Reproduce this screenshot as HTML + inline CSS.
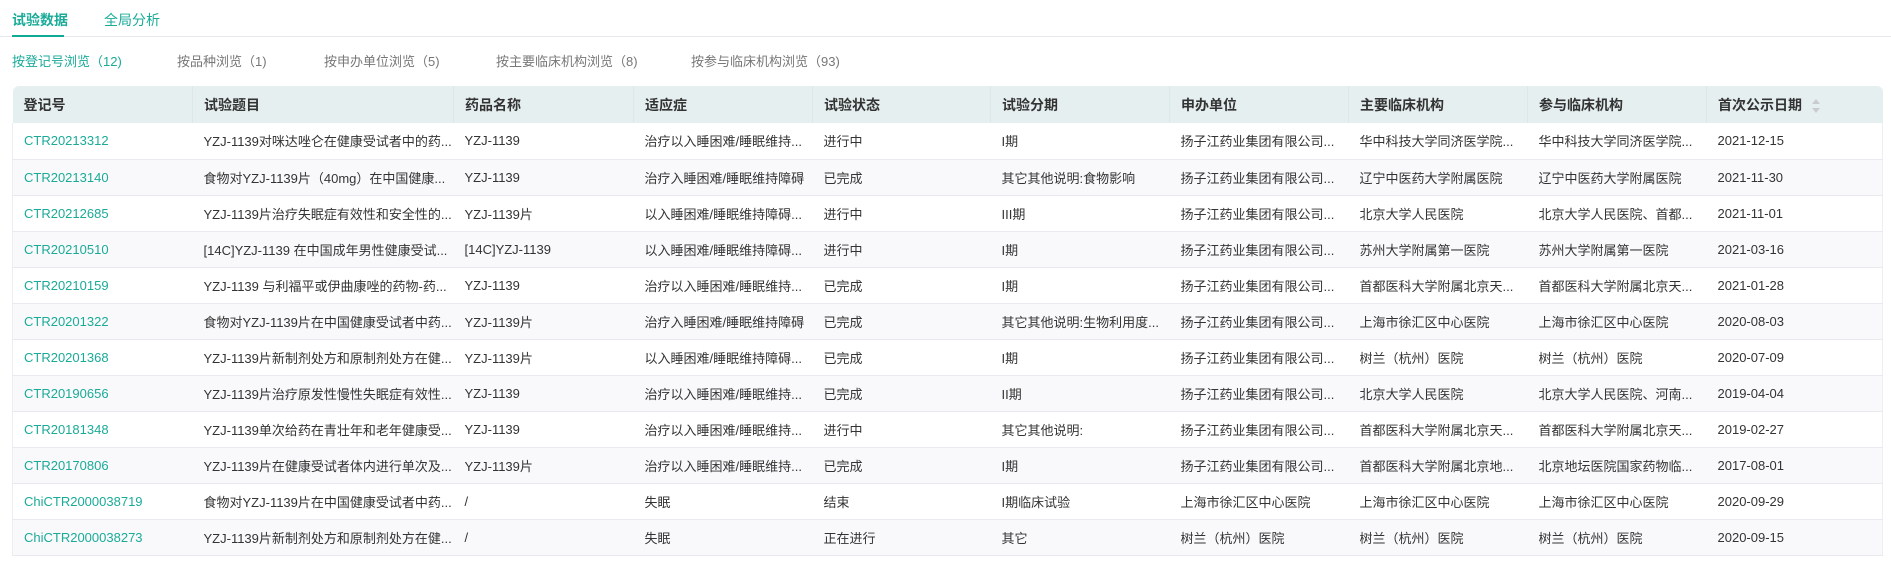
<!DOCTYPE html>
<html><head><meta charset="utf-8"><style>
*{margin:0;padding:0;box-sizing:border-box}
body{width:1891px;height:566px;background:#fff;font-family:"Liberation Sans","Noto Sans CJK SC",sans-serif;color:#333;position:relative;overflow:hidden}
.tabs{position:absolute;left:0;top:0;width:1891px;height:37px;border-bottom:1px solid #e6e8ee}
.tab{position:absolute;top:10px;font-size:14px;color:#1aab98}
.ul{position:absolute;left:12px;top:35px;width:52px;height:2px;background:#12a896}
.sub{position:absolute;top:51px;font-size:13px;color:#777}
table{position:absolute;left:12px;top:86px;width:1870px;border-collapse:collapse;table-layout:fixed;font-size:13px}
th{background:#e6eff0;height:37px;text-align:left;font-weight:bold;color:#333;padding-left:11px;font-size:14px;border-right:1px solid #dbe8e8}
th:first-child{border-top-left-radius:6px}
th:last-child{border-top-right-radius:6px;border-right:none}
td{height:36px;padding-left:11px;border-bottom:1px solid #e8eaf0;white-space:nowrap;overflow:hidden;color:#333}
tr:nth-child(even) td{background:#f9f9fb}
tbody tr td:first-child{border-left:1px solid #eceef2}
tbody tr td:last-child{border-right:1px solid #eceef2}
td.l{color:#1aab98}
.sort{display:inline-block;vertical-align:middle;margin-left:10px;position:relative;width:8px;height:14px}
.sort:before{content:"";position:absolute;top:0;left:0;border:4px solid transparent;border-bottom:5px solid #c8ccd0;border-top:0}
.sort:after{content:"";position:absolute;bottom:0;left:0;border:4px solid transparent;border-top:5px solid #c8ccd0;border-bottom:0}
</style></head><body>
<div class="tabs"></div>
<div class="tab" style="left:12px;font-weight:bold">试验数据</div>
<div class="tab" style="left:104px">全局分析</div>
<div class="ul"></div>
<div class="sub" style="left:12px;color:#1aab98">按登记号浏览（12)</div>
<div class="sub" style="left:177px">按品种浏览（1)</div>
<div class="sub" style="left:324px">按申办单位浏览（5)</div>
<div class="sub" style="left:496px">按主要临床机构浏览（8)</div>
<div class="sub" style="left:691px">按参与临床机构浏览（93)</div>
<table>
<colgroup><col style="width:180px"><col style="width:261px"><col style="width:180px"><col style="width:179px"><col style="width:178px"><col style="width:179px"><col style="width:179px"><col style="width:179px"><col style="width:179px"><col style="width:176px"></colgroup>
<thead><tr><th>登记号</th><th>试验题目</th><th>药品名称</th><th>适应症</th><th>试验状态</th><th>试验分期</th><th>申办单位</th><th>主要临床机构</th><th>参与临床机构</th><th>首次公示日期<span class="sort"></span></th></tr></thead>
<tbody>
<tr><td class="l">CTR20213312</td><td>YZJ-1139对咪达唑仑在健康受试者中的药...</td><td>YZJ-1139</td><td>治疗以入睡困难/睡眠维持...</td><td>进行中</td><td>I期</td><td>扬子江药业集团有限公司...</td><td>华中科技大学同济医学院...</td><td>华中科技大学同济医学院...</td><td>2021-12-15</td></tr>
<tr><td class="l">CTR20213140</td><td>食物对YZJ-1139片（40mg）在中国健康...</td><td>YZJ-1139</td><td>治疗入睡困难/睡眠维持障碍</td><td>已完成</td><td>其它其他说明:食物影响</td><td>扬子江药业集团有限公司...</td><td>辽宁中医药大学附属医院</td><td>辽宁中医药大学附属医院</td><td>2021-11-30</td></tr>
<tr><td class="l">CTR20212685</td><td>YZJ-1139片治疗失眠症有效性和安全性的...</td><td>YZJ-1139片</td><td>以入睡困难/睡眠维持障碍...</td><td>进行中</td><td>III期</td><td>扬子江药业集团有限公司...</td><td>北京大学人民医院</td><td>北京大学人民医院、首都...</td><td>2021-11-01</td></tr>
<tr><td class="l">CTR20210510</td><td>[14C]YZJ-1139 在中国成年男性健康受试...</td><td>[14C]YZJ-1139</td><td>以入睡困难/睡眠维持障碍...</td><td>进行中</td><td>I期</td><td>扬子江药业集团有限公司...</td><td>苏州大学附属第一医院</td><td>苏州大学附属第一医院</td><td>2021-03-16</td></tr>
<tr><td class="l">CTR20210159</td><td>YZJ-1139 与利福平或伊曲康唑的药物-药...</td><td>YZJ-1139</td><td>治疗以入睡困难/睡眠维持...</td><td>已完成</td><td>I期</td><td>扬子江药业集团有限公司...</td><td>首都医科大学附属北京天...</td><td>首都医科大学附属北京天...</td><td>2021-01-28</td></tr>
<tr><td class="l">CTR20201322</td><td>食物对YZJ-1139片在中国健康受试者中药...</td><td>YZJ-1139片</td><td>治疗入睡困难/睡眠维持障碍</td><td>已完成</td><td>其它其他说明:生物利用度...</td><td>扬子江药业集团有限公司...</td><td>上海市徐汇区中心医院</td><td>上海市徐汇区中心医院</td><td>2020-08-03</td></tr>
<tr><td class="l">CTR20201368</td><td>YZJ-1139片新制剂处方和原制剂处方在健...</td><td>YZJ-1139片</td><td>以入睡困难/睡眠维持障碍...</td><td>已完成</td><td>I期</td><td>扬子江药业集团有限公司...</td><td>树兰（杭州）医院</td><td>树兰（杭州）医院</td><td>2020-07-09</td></tr>
<tr><td class="l">CTR20190656</td><td>YZJ-1139片治疗原发性慢性失眠症有效性...</td><td>YZJ-1139</td><td>治疗以入睡困难/睡眠维持...</td><td>已完成</td><td>II期</td><td>扬子江药业集团有限公司...</td><td>北京大学人民医院</td><td>北京大学人民医院、河南...</td><td>2019-04-04</td></tr>
<tr><td class="l">CTR20181348</td><td>YZJ-1139单次给药在青壮年和老年健康受...</td><td>YZJ-1139</td><td>治疗以入睡困难/睡眠维持...</td><td>进行中</td><td>其它其他说明:</td><td>扬子江药业集团有限公司...</td><td>首都医科大学附属北京天...</td><td>首都医科大学附属北京天...</td><td>2019-02-27</td></tr>
<tr><td class="l">CTR20170806</td><td>YZJ-1139片在健康受试者体内进行单次及...</td><td>YZJ-1139片</td><td>治疗以入睡困难/睡眠维持...</td><td>已完成</td><td>I期</td><td>扬子江药业集团有限公司...</td><td>首都医科大学附属北京地...</td><td>北京地坛医院国家药物临...</td><td>2017-08-01</td></tr>
<tr><td class="l">ChiCTR2000038719</td><td>食物对YZJ-1139片在中国健康受试者中药...</td><td>/</td><td>失眠</td><td>结束</td><td>I期临床试验</td><td>上海市徐汇区中心医院</td><td>上海市徐汇区中心医院</td><td>上海市徐汇区中心医院</td><td>2020-09-29</td></tr>
<tr><td class="l">ChiCTR2000038273</td><td>YZJ-1139片新制剂处方和原制剂处方在健...</td><td>/</td><td>失眠</td><td>正在进行</td><td>其它</td><td>树兰（杭州）医院</td><td>树兰（杭州）医院</td><td>树兰（杭州）医院</td><td>2020-09-15</td></tr>
</tbody></table>
</body></html>
